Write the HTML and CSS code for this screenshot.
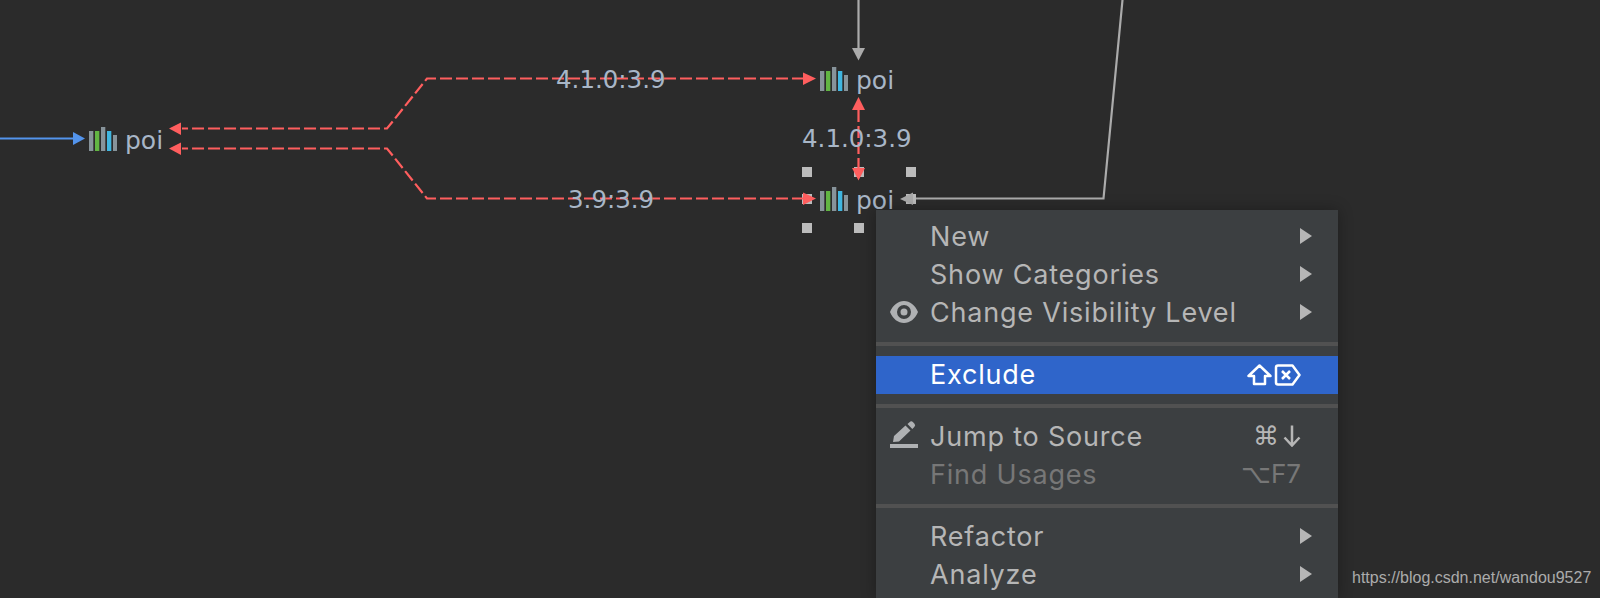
FILE: index.html
```html
<!DOCTYPE html>
<html lang="en">
<head>
<meta charset="utf-8">
<title>Dependency diagram</title>
<link rel="stylesheet" href="styles.css">
</head>
<body>
<div class="canvas">
  <svg class="edges" width="1600" height="598" viewBox="0 0 1600 598">
    <g class="edge-gray">
      <path d="M858.500 0V50"/>
      <path d="M905 198.500H1103.500L1122.500 0"/>
    </g>
    <polygon class="fill-gray" points="852,48 865,48 858.500,60.500"/>
    <path class="edge-blue" d="M0 138.500H74"/>
    <polygon class="fill-blue" points="73,132 73,145 85,138.500"/>
    <g class="handles">
      <rect x="802" y="167" width="10" height="10"/><rect x="854" y="167" width="10" height="10"/><rect x="906" y="167" width="10" height="10"/>
      <rect x="802" y="194" width="10" height="10"/><rect x="906" y="194" width="10" height="10"/>
      <rect x="802" y="223" width="10" height="10"/><rect x="854" y="223" width="10" height="10"/>
    </g>
    <polygon class="fill-gray" points="913,192.500 913,205 900,199"/>
    <g class="edge-red">
      <path d="M804 78.500H427L387 128.500H182"/>
      <path d="M804 198.500H427L387 148.500H182"/>
      <path d="M858.500 110V168"/>
    </g>
    <g class="fill-red">
      <polygon points="803,72.500 803,85 816,78.500"/>
      <polygon points="803,192.500 803,205 816,198.500"/>
      <polygon points="181,122.500 181,135 169,128.500"/>
      <polygon points="181,142.500 181,155 169,148.500"/>
      <polygon points="852,110 865,110 858.500,97"/>
      <polygon points="852,168 865,168 858.500,180.500"/>
    </g>
  </svg>

  <span class="edge-label label-a">4.1.0:3.9</span>
  <span class="edge-label label-b">4.1.0:3.9</span>
  <span class="edge-label label-c">3.9:3.9</span>

  <div class="node node-top">
    <svg class="bars" width="28" height="24" viewBox="0 0 28 24"><rect class="bg" x="0" y="4" width="4.300" height="20"/><rect class="bgreen" x="6" y="4" width="4.300" height="20"/><rect class="bg" x="12" y="0" width="4.300" height="24"/><rect class="bblue" x="18" y="4" width="4.300" height="20"/><rect class="bg" x="24" y="8" width="4" height="16"/></svg>
    <span class="node-name">poi</span>
  </div>
  <div class="node node-mid">
    <svg class="bars" width="28" height="24" viewBox="0 0 28 24"><rect class="bg" x="0" y="4" width="4.300" height="20"/><rect class="bgreen" x="6" y="4" width="4.300" height="20"/><rect class="bg" x="12" y="0" width="4.300" height="24"/><rect class="bblue" x="18" y="4" width="4.300" height="20"/><rect class="bg" x="24" y="8" width="4" height="16"/></svg>
    <span class="node-name">poi</span>
  </div>
  <div class="node node-left">
    <svg class="bars" width="28" height="24" viewBox="0 0 28 24"><rect class="bg" x="0" y="4" width="4.300" height="20"/><rect class="bgreen" x="6" y="4" width="4.300" height="20"/><rect class="bg" x="12" y="0" width="4.300" height="24"/><rect class="bblue" x="18" y="4" width="4.300" height="20"/><rect class="bg" x="24" y="8" width="4" height="16"/></svg>
    <span class="node-name">poi</span>
  </div>

  <div class="menu">
    <div class="item"><span class="ic"></span><span class="name">New</span><span class="sub"></span></div>
    <div class="item"><span class="ic"></span><span class="name">Show Categories</span><span class="sub"></span></div>
    <div class="item"><span class="ic"><svg width="28" height="22" viewBox="0 0 28 22"><path class="glyph" fill-rule="evenodd" d="M14 0C8 0 3 4 0 11c3 7 8 11 14 11s11-4 14-11C25 4 20 0 14 0zm0 18a7 7 0 1 1 0-14 7 7 0 0 1 0 14zm0-3.500a3.500 3.500 0 1 0 0-7 3.500 3.500 0 0 0 0 7z"/></svg></span><span class="name">Change Visibility Level</span><span class="sub"></span></div>
    <div class="sep sep-a"></div>
    <div class="item selected"><span class="ic"></span><span class="name name-flush">Exclude</span>
      <span class="keys"><svg width="54" height="22" viewBox="0 0 54 22"><path class="key-line" d="M12.500 1.500 1.500 12H7V20H18V12H23.500Z"/><path class="key-line" d="M31 1.500H45.500L52.500 11 45.500 20.500H31a2 2 0 0 1-2-2V3.500a2 2 0 0 1 2-2z"/><path class="key-line" d="M35 7l8 8M43 7l-8 8"/></svg></span></div>
    <div class="sep sep-b"></div>
    <div class="item"><span class="ic ic-up"><svg width="28" height="28" viewBox="0 0 28 28"><path class="glyph" d="M0 24h28v4H0zM3 22 4 16 15.500 5.500 20.500 10.500 9 21.500zM17.500 4l2-1.800a2.600 2.600 0 0 1 3.600 0l1.200 1.200a2.600 2.600 0 0 1 0 3.600l-2 2z"/></svg></span><span class="name">Jump to Source</span>
      <span class="keys"><span class="shortcut">⌘</span><svg class="arrow" width="18" height="22" viewBox="0 0 18 22"><path class="arrow-line" d="M9 0.500V20.500M1.500 12.500 9 20.500 16.500 12.500"/></svg></span></div>
    <div class="item off"><span class="ic"></span><span class="name">Find Usages</span><span class="keys"><span class="shortcut">⌥</span><span class="fkey">F7</span></span></div>
    <div class="sep sep-c"></div>
    <div class="item"><span class="ic"></span><span class="name">Refactor</span><span class="sub"></span></div>
    <div class="item"><span class="ic"></span><span class="name">Analyze</span><span class="sub"></span></div>
  </div>

  <span class="mark">https://blog.csdn.net/wandou9527</span>
</div>
</body>
</html>
```
FILE: styles.css
```css
* { box-sizing: border-box; }
html, body { margin: 0; padding: 0; background: #2b2b2b; overflow: hidden; }
.canvas { position: relative; width: 1600px; height: 598px; overflow: hidden; background: #2b2b2b; }
.edges { position: absolute; left: 0; top: 0; }
.edge-gray { fill: none; stroke: #ababab; stroke-width: 2.200; }
.edge-blue { fill: none; stroke: #5394ec; stroke-width: 2.200; }
.edge-red { fill: none; stroke: #ff5e5e; stroke-width: 2.200; stroke-dasharray: 12 4; }
.fill-gray { fill: #ababab; }
.fill-blue { fill: #5394ec; }
.fill-red { fill: #ff5e5e; }
.handles { fill: #bcbcbc; }

.edge-label { position: absolute; font: 24.500px/28px "DejaVu Sans", sans-serif; color: #a8b6c7; white-space: nowrap; }
.label-a { left: 556px; top: 66px; }
.label-b { left: 802px; top: 125px; }
.label-c { left: 568px; top: 186px; }

.node { position: absolute; display: flex; align-items: center; gap: 8px; font: 25px/28px "DejaVu Sans", sans-serif; color: #a8b6c7; }
.node-top { left: 820px; top: 65px; }
.node-mid { left: 820px; top: 185px; }
.node-left { left: 89px; top: 125px; }
.node-name { position: relative; top: 2px; }
.bars { display: block; flex: none; }
.bg { fill: #87939a; }
.bgreen { fill: #62b543; }
.bblue { fill: #40b6e0; }

.menu { position: absolute; left: 876px; top: 210px; width: 462px; height: 388px; padding-top: 7px; background: #3c3f41; box-shadow: 0 0 14px rgba(0, 0, 0, 0.3); font: 27px/38px Inter, sans-serif; color: #b6b6b6; }
.item { display: flex; align-items: center; height: 38px; padding-right: 26px; }
.ic { width: 54px; flex: none; padding-left: 14px; display: flex; align-items: center; }
.ic svg { display: block; }
.ic-up { position: relative; top: -2px; }
.name { flex: 1; letter-spacing: 0.800px; white-space: nowrap; padding-top: 2px; }
.name-flush { padding-top: 0; }
.selected { background: #2f65ca; color: #fff; }
.off { color: #777; }
.sep { height: 4px; background: #515151; }
.sep-a { margin: 11px 0 10px; }
.sep-b { margin: 10px 0 9px; }
.sep-c { margin: 11px 0 9px; }
.sub { width: 0; height: 0; border-left: 12px solid #b6b6b6; border-top: 8px solid transparent; border-bottom: 8px solid transparent; }
.keys { display: flex; align-items: center; margin-right: 11px; }
.shortcut { font-family: "DejaVu Sans", sans-serif; font-size: 26px; line-height: 38px; }
.fkey { font-size: 26px; }
.arrow { display: block; margin-left: 4px; }
.arrow-line { fill: none; stroke: #b6b6b6; stroke-width: 2.500; }
.glyph { fill: #afb1b3; }
.key-line { fill: none; stroke: #fff; stroke-width: 2.500; stroke-linejoin: round; }

.mark { position: absolute; left: 1352px; top: 569px; font: 16px/18px "Liberation Sans", sans-serif; color: #ababab; white-space: nowrap; }
```
